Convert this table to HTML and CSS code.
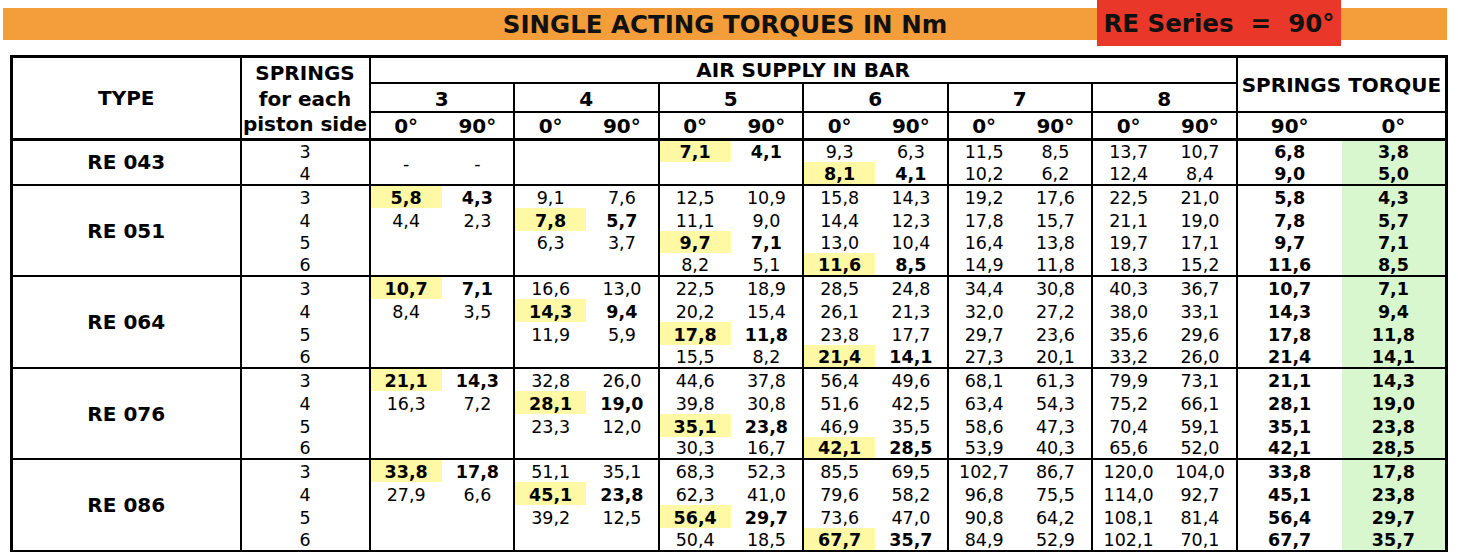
FILE: index.html
```html
<!DOCTYPE html>
<html lang="en">
<head>
<meta charset="utf-8">
<title>Single acting torques in Nm</title>
<link rel="stylesheet" href="styles.css">
</head>
<body>
<div class="page">
  <header class="banner">
    <div class="bar"><h1 class="title">SINGLE ACTING TORQUES IN Nm</h1></div>
    <div class="badge">RE Series &nbsp;=&nbsp; 90°</div>
  </header>

  <table class="torque">
    <colgroup>
      <col class="c-type"><col class="c-spr">
      <col class="c-half"><col class="c-half"><col class="c-half"><col class="c-half">
      <col class="c-half"><col class="c-half"><col class="c-half"><col class="c-half">
      <col class="c-half"><col class="c-half"><col class="c-half"><col class="c-half">
      <col class="c-st"><col class="c-st">
    </colgroup>
    <thead>
      <tr class="h1">
        <th rowspan="3" class="type">TYPE</th>
        <th rowspan="3" class="spr springs-h">SPRINGS<br>for each<br>piston side</th>
        <th colspan="12" class="air">AIR SUPPLY IN BAR</th>
        <th colspan="2" rowspan="2" class="stq">SPRINGS TORQUE</th>
      </tr>
      <tr class="h2">
        <th colspan="2" class="b">3</th>
        <th colspan="2" class="b">4</th>
        <th colspan="2" class="b">5</th>
        <th colspan="2" class="b">6</th>
        <th colspan="2" class="b">7</th>
        <th colspan="2" class="b">8</th>
      </tr>
      <tr class="h3">
        <th class="a">0°</th><th class="b">90°</th>
        <th class="a">0°</th><th class="b">90°</th>
        <th class="a">0°</th><th class="b">90°</th>
        <th class="a">0°</th><th class="b">90°</th>
        <th class="a">0°</th><th class="b">90°</th>
        <th class="a">0°</th><th class="b">90°</th>
        <th class="st">90°</th><th class="st">0°</th>
      </tr>
    </thead>
    <tbody>
      <!-- RE 043 -->
      <tr class="g">
        <th rowspan="2" class="type">RE 043</th>
        <td class="spr">3</td>
        <td class="a mid" rowspan="2">-</td><td class="b mid" rowspan="2">-</td>
        <td class="a" rowspan="2"></td><td class="b" rowspan="2"></td>
        <td class="a hl">7,1</td><td class="b bd">4,1</td>
        <td class="a">9,3</td><td class="b">6,3</td>
        <td class="a">11,5</td><td class="b">8,5</td>
        <td class="a">13,7</td><td class="b">10,7</td>
        <td class="st bd">6,8</td><td class="st gr bd">3,8</td>
      </tr>
      <tr>
        <td class="spr">4</td>
        <td class="a"></td><td class="b"></td>
        <td class="a hl">8,1</td><td class="b bd">4,1</td>
        <td class="a">10,2</td><td class="b">6,2</td>
        <td class="a">12,4</td><td class="b">8,4</td>
        <td class="st bd">9,0</td><td class="st gr bd">5,0</td>
      </tr>

      <!-- RE 051 -->
      <tr class="g">
        <th rowspan="4" class="type">RE 051</th>
        <td class="spr">3</td>
        <td class="a hl">5,8</td><td class="b bd">4,3</td>
        <td class="a">9,1</td><td class="b">7,6</td>
        <td class="a">12,5</td><td class="b">10,9</td>
        <td class="a">15,8</td><td class="b">14,3</td>
        <td class="a">19,2</td><td class="b">17,6</td>
        <td class="a">22,5</td><td class="b">21,0</td>
        <td class="st bd">5,8</td><td class="st gr bd">4,3</td>
      </tr>
      <tr>
        <td class="spr">4</td>
        <td class="a">4,4</td><td class="b">2,3</td>
        <td class="a hl">7,8</td><td class="b bd">5,7</td>
        <td class="a">11,1</td><td class="b">9,0</td>
        <td class="a">14,4</td><td class="b">12,3</td>
        <td class="a">17,8</td><td class="b">15,7</td>
        <td class="a">21,1</td><td class="b">19,0</td>
        <td class="st bd">7,8</td><td class="st gr bd">5,7</td>
      </tr>
      <tr>
        <td class="spr">5</td>
        <td class="a"></td><td class="b"></td>
        <td class="a">6,3</td><td class="b">3,7</td>
        <td class="a hl">9,7</td><td class="b bd">7,1</td>
        <td class="a">13,0</td><td class="b">10,4</td>
        <td class="a">16,4</td><td class="b">13,8</td>
        <td class="a">19,7</td><td class="b">17,1</td>
        <td class="st bd">9,7</td><td class="st gr bd">7,1</td>
      </tr>
      <tr>
        <td class="spr">6</td>
        <td class="a"></td><td class="b"></td>
        <td class="a"></td><td class="b"></td>
        <td class="a">8,2</td><td class="b">5,1</td>
        <td class="a hl">11,6</td><td class="b bd">8,5</td>
        <td class="a">14,9</td><td class="b">11,8</td>
        <td class="a">18,3</td><td class="b">15,2</td>
        <td class="st bd">11,6</td><td class="st gr bd">8,5</td>
      </tr>

      <!-- RE 064 -->
      <tr class="g">
        <th rowspan="4" class="type">RE 064</th>
        <td class="spr">3</td>
        <td class="a hl">10,7</td><td class="b bd">7,1</td>
        <td class="a">16,6</td><td class="b">13,0</td>
        <td class="a">22,5</td><td class="b">18,9</td>
        <td class="a">28,5</td><td class="b">24,8</td>
        <td class="a">34,4</td><td class="b">30,8</td>
        <td class="a">40,3</td><td class="b">36,7</td>
        <td class="st bd">10,7</td><td class="st gr bd">7,1</td>
      </tr>
      <tr>
        <td class="spr">4</td>
        <td class="a">8,4</td><td class="b">3,5</td>
        <td class="a hl">14,3</td><td class="b bd">9,4</td>
        <td class="a">20,2</td><td class="b">15,4</td>
        <td class="a">26,1</td><td class="b">21,3</td>
        <td class="a">32,0</td><td class="b">27,2</td>
        <td class="a">38,0</td><td class="b">33,1</td>
        <td class="st bd">14,3</td><td class="st gr bd">9,4</td>
      </tr>
      <tr>
        <td class="spr">5</td>
        <td class="a"></td><td class="b"></td>
        <td class="a">11,9</td><td class="b">5,9</td>
        <td class="a hl">17,8</td><td class="b bd">11,8</td>
        <td class="a">23,8</td><td class="b">17,7</td>
        <td class="a">29,7</td><td class="b">23,6</td>
        <td class="a">35,6</td><td class="b">29,6</td>
        <td class="st bd">17,8</td><td class="st gr bd">11,8</td>
      </tr>
      <tr>
        <td class="spr">6</td>
        <td class="a"></td><td class="b"></td>
        <td class="a"></td><td class="b"></td>
        <td class="a">15,5</td><td class="b">8,2</td>
        <td class="a hl">21,4</td><td class="b bd">14,1</td>
        <td class="a">27,3</td><td class="b">20,1</td>
        <td class="a">33,2</td><td class="b">26,0</td>
        <td class="st bd">21,4</td><td class="st gr bd">14,1</td>
      </tr>

      <!-- RE 076 -->
      <tr class="g">
        <th rowspan="4" class="type">RE 076</th>
        <td class="spr">3</td>
        <td class="a hl">21,1</td><td class="b bd">14,3</td>
        <td class="a">32,8</td><td class="b">26,0</td>
        <td class="a">44,6</td><td class="b">37,8</td>
        <td class="a">56,4</td><td class="b">49,6</td>
        <td class="a">68,1</td><td class="b">61,3</td>
        <td class="a">79,9</td><td class="b">73,1</td>
        <td class="st bd">21,1</td><td class="st gr bd">14,3</td>
      </tr>
      <tr>
        <td class="spr">4</td>
        <td class="a">16,3</td><td class="b">7,2</td>
        <td class="a hl">28,1</td><td class="b bd">19,0</td>
        <td class="a">39,8</td><td class="b">30,8</td>
        <td class="a">51,6</td><td class="b">42,5</td>
        <td class="a">63,4</td><td class="b">54,3</td>
        <td class="a">75,2</td><td class="b">66,1</td>
        <td class="st bd">28,1</td><td class="st gr bd">19,0</td>
      </tr>
      <tr>
        <td class="spr">5</td>
        <td class="a"></td><td class="b"></td>
        <td class="a">23,3</td><td class="b">12,0</td>
        <td class="a hl">35,1</td><td class="b bd">23,8</td>
        <td class="a">46,9</td><td class="b">35,5</td>
        <td class="a">58,6</td><td class="b">47,3</td>
        <td class="a">70,4</td><td class="b">59,1</td>
        <td class="st bd">35,1</td><td class="st gr bd">23,8</td>
      </tr>
      <tr>
        <td class="spr">6</td>
        <td class="a"></td><td class="b"></td>
        <td class="a"></td><td class="b"></td>
        <td class="a">30,3</td><td class="b">16,7</td>
        <td class="a hl">42,1</td><td class="b bd">28,5</td>
        <td class="a">53,9</td><td class="b">40,3</td>
        <td class="a">65,6</td><td class="b">52,0</td>
        <td class="st bd">42,1</td><td class="st gr bd">28,5</td>
      </tr>

      <!-- RE 086 -->
      <tr class="g">
        <th rowspan="4" class="type">RE 086</th>
        <td class="spr">3</td>
        <td class="a hl">33,8</td><td class="b bd">17,8</td>
        <td class="a">51,1</td><td class="b">35,1</td>
        <td class="a">68,3</td><td class="b">52,3</td>
        <td class="a">85,5</td><td class="b">69,5</td>
        <td class="a">102,7</td><td class="b">86,7</td>
        <td class="a">120,0</td><td class="b">104,0</td>
        <td class="st bd">33,8</td><td class="st gr bd">17,8</td>
      </tr>
      <tr>
        <td class="spr">4</td>
        <td class="a">27,9</td><td class="b">6,6</td>
        <td class="a hl">45,1</td><td class="b bd">23,8</td>
        <td class="a">62,3</td><td class="b">41,0</td>
        <td class="a">79,6</td><td class="b">58,2</td>
        <td class="a">96,8</td><td class="b">75,5</td>
        <td class="a">114,0</td><td class="b">92,7</td>
        <td class="st bd">45,1</td><td class="st gr bd">23,8</td>
      </tr>
      <tr>
        <td class="spr">5</td>
        <td class="a"></td><td class="b"></td>
        <td class="a">39,2</td><td class="b">12,5</td>
        <td class="a hl">56,4</td><td class="b bd">29,7</td>
        <td class="a">73,6</td><td class="b">47,0</td>
        <td class="a">90,8</td><td class="b">64,2</td>
        <td class="a">108,1</td><td class="b">81,4</td>
        <td class="st bd">56,4</td><td class="st gr bd">29,7</td>
      </tr>
      <tr>
        <td class="spr">6</td>
        <td class="a"></td><td class="b"></td>
        <td class="a"></td><td class="b"></td>
        <td class="a">50,4</td><td class="b">18,5</td>
        <td class="a hl">67,7</td><td class="b bd">35,7</td>
        <td class="a">84,9</td><td class="b">52,9</td>
        <td class="a">102,1</td><td class="b">70,1</td>
        <td class="st bd">67,7</td><td class="st gr bd">35,7</td>
      </tr>
    </tbody>
  </table>
</div>
</body>
</html>
```

FILE: styles.css
```css
html, body {
  margin: 0;
  padding: 0;
  background: #ffffff;
}

body {
  font-family: "DejaVu Sans", Verdana, sans-serif;
  color: #000;
}

.page {
  width: 1458px;
  height: 552px;
  overflow: hidden;
}

/* ---------- banner ---------- */
.banner {
  position: relative;
  height: 40px;
  padding-top: 8px;
  box-sizing: border-box;
}

.bar {
  margin-left: 3px;
  width: 1444px;
  height: 32px;
  background: #f39d3b;
  display: flex;
  justify-content: center;
  align-items: center;
}

.title {
  margin: 0;
  font-size: 24.5px;
  font-weight: bold;
  line-height: 32px;
  color: #111;
  padding-top: 2px;
}

.badge {
  position: absolute;
  left: 1097px;
  top: 0;
  width: 244px;
  height: 46px;
  background: #e9372a;
  color: #111;
  font-size: 24.5px;
  font-weight: bold;
  line-height: 48px;
  text-align: center;
  white-space: nowrap;
}

/* ---------- table ---------- */
.torque {
  margin-top: 15px;
  margin-left: 10px;
  border-collapse: collapse;
  table-layout: fixed;
  width: 1437px;
  border: 3px solid #000;
}

.c-type { width: 229px; }
.c-spr  { width: 129px; }
.c-half { width: 72.25px; }
.c-st   { width: 105px; }

.torque th,
.torque td {
  padding: 0;
  text-align: center;
  white-space: nowrap;
}

/* header */
.torque thead th {
  font-size: 20px;
  font-weight: bold;
  line-height: 20px;
  vertical-align: bottom;
  padding-bottom: 2px;
}

.torque .h1 { height: 26px; }
.torque .h2 { height: 28px; }
.torque .h3 { height: 26px; }

.torque thead th.type {
  vertical-align: middle;
  border-right: 2px solid #000;
  padding-bottom: 0;
}

.torque thead th.springs-h {
  line-height: 25.5px;
  vertical-align: top;
  padding: 3px 0 0;
}

.torque th.air {
  border-bottom: 2px solid #000;
}

.torque th.stq {
  border-left: 2px solid #000;
  border-bottom: 2px solid #000;
  vertical-align: middle;
  padding-bottom: 0;
}

.torque .spr,
.torque .b {
  border-right: 2px solid #000;
}

.torque .h2 th {
  border-bottom: 2px solid #000;
}

/* body */
.torque tbody tr { height: 22.9px; }

.torque tbody td {
  font-size: 17.5px;
  line-height: 17px;
  vertical-align: bottom;
  padding-bottom: 1px;
}

.torque tbody th.type {
  font-size: 20px;
  font-weight: bold;
  vertical-align: middle;
  border-right: 2px solid #000;
}

.torque tr.g > * {
  border-top: 2px solid #000;
}

.torque tbody tr.g:first-child > * {
  border-top: 3px solid #000;
}

.torque td.mid {
  vertical-align: middle;
  padding: 4px 0 0;
}

.torque .hl {
  background: #fff9a6;
  font-weight: bold;
}

.torque .bd {
  font-weight: bold;
}

.torque .gr {
  background: #d8f7cf;
}
```
